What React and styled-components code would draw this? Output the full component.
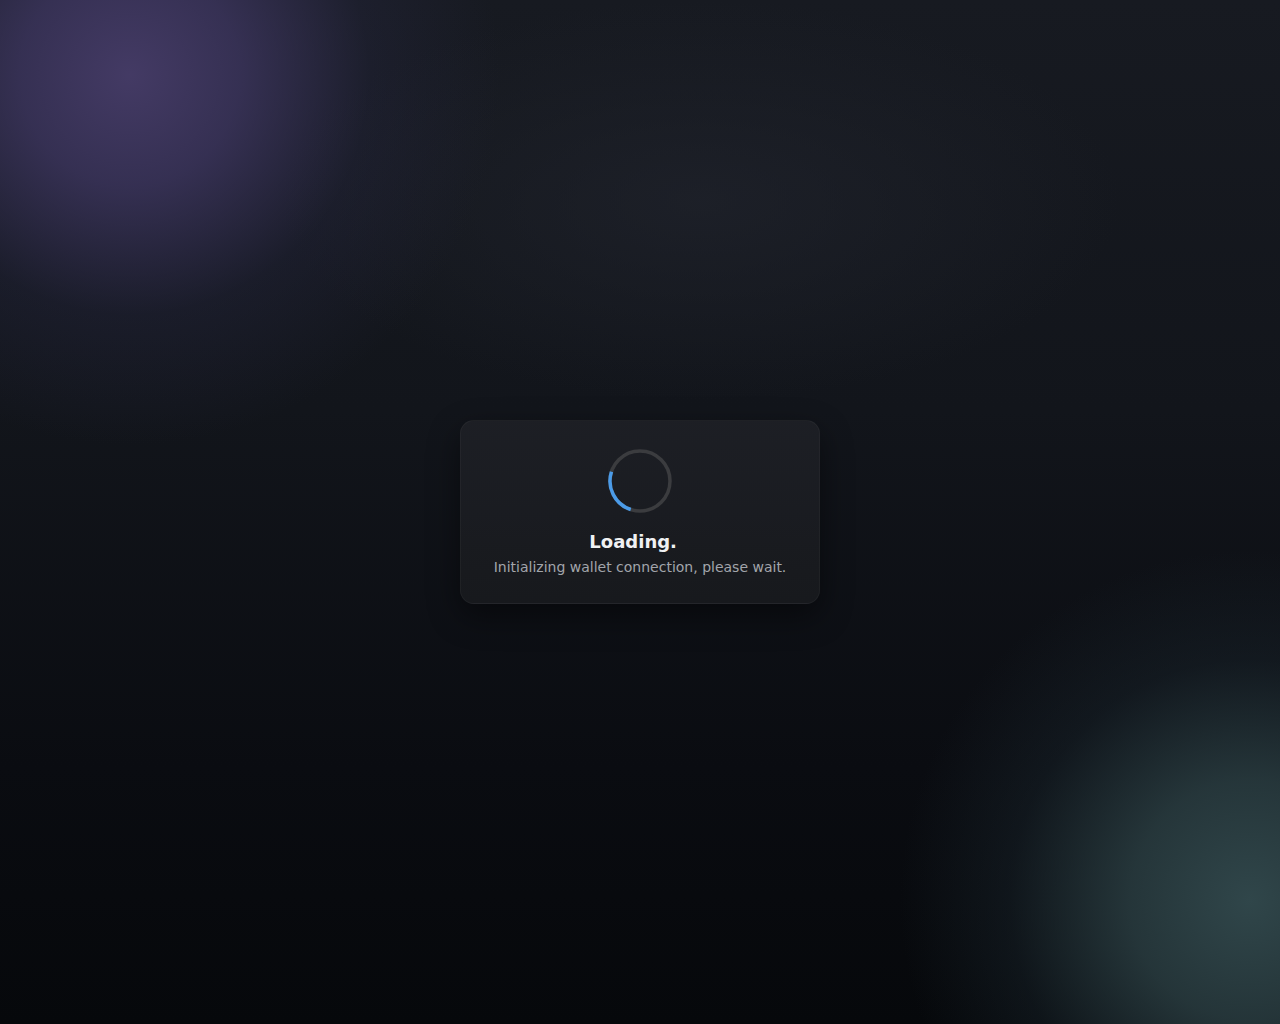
import React from "react";
import styled, { createGlobalStyle } from "styled-components";

const GlobalStyle = createGlobalStyle`
  html, body {
    margin: 0;
    padding: 0;
    height: 100%;
  }
  body {
    background: #0b0d12;
    font-family: "DejaVu Sans", "Liberation Sans", sans-serif;
  }
  #root {
    height: 100%;
  }
`;

const Screen = styled.div`
  height: 100vh;
  display: flex;
  align-items: center;
  justify-content: center;
  background:
    radial-gradient(circle at 130px 75px, rgba(70, 60, 104, 0.95) 0px, rgba(64, 56, 100, 0.75) 110px, rgba(42, 42, 72, 0.3) 240px, rgba(30, 30, 50, 0) 370px),
    radial-gradient(circle at 1250px 900px, rgba(48, 70, 74, 1) 0px, rgba(44, 64, 68, 0.8) 120px, rgba(30, 44, 52, 0.35) 240px, rgba(20, 28, 36, 0) 350px),
    radial-gradient(ellipse 420px 200px at 700px 200px, rgba(32, 35, 44, 0.7), rgba(26, 28, 36, 0)),
    linear-gradient(180deg, #171a21 0%, #12151b 40%, #0a0c11 75%, #06080b 100%);
`;

const Card = styled.div`
  width: 360px;
  box-sizing: border-box;
  padding: 28px 24px 26px;
  display: flex;
  flex-direction: column;
  align-items: center;
  background: linear-gradient(180deg, rgba(30, 32, 37, 0.96), rgba(24, 26, 30, 0.96));
  border: 1px solid rgba(255, 255, 255, 0.035);
  border-radius: 14px;
  box-shadow: 0 12px 32px rgba(0, 0, 0, 0.45);
`;

const SpinnerSvg = styled.svg`
  width: 64px;
  height: 64px;
  margin-bottom: 17px;
  display: block;
`;

const Title = styled.div`
  font-size: 18px;
  line-height: 24px;
  font-weight: 700;
  color: #f0f1f3;
  white-space: nowrap;
`;

const HiddenDots = styled.span`
  visibility: hidden;
`;

const Subtitle = styled.div`
  margin-top: 3px;
  font-size: 14px;
  line-height: 20px;
  color: #a2a5ab;
  white-space: nowrap;
`;

const Spinner = () => (
  <SpinnerSvg viewBox="0 0 64 64">
    <circle cx="32" cy="32" r="30" fill="none" stroke="#3b3c3f" strokeWidth="3.5" />
    <circle
      cx="32"
      cy="32"
      r="30"
      fill="none"
      stroke="#4b9be8"
      strokeWidth="3.5"
      strokeDasharray="47.1 141.4"
      transform="rotate(108 32 32)"
    />
  </SpinnerSvg>
);

export default function App() {
  return (
    <>
      <GlobalStyle />
      <Screen>
        <Card>
          <Spinner />
          <Title>
            Loading.<HiddenDots>..</HiddenDots>
          </Title>
          <Subtitle>Initializing wallet connection, please wait.</Subtitle>
        </Card>
      </Screen>
    </>
  );
}
